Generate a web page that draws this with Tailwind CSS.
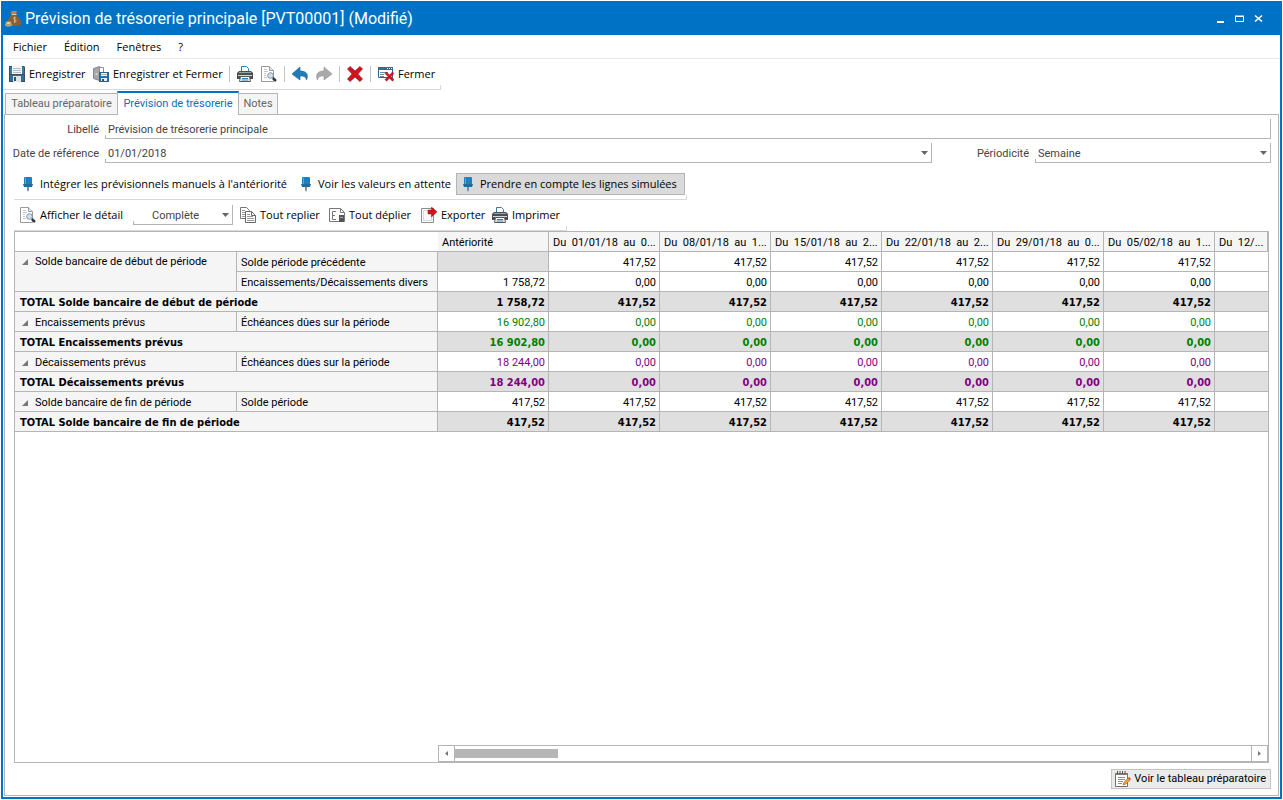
<!DOCTYPE html>
<html lang="fr">
<head>
<meta charset="utf-8">
<meta name="viewport" content="width=device-width, initial-scale=1">
<title>Prévision de trésorerie principale</title>
<script src="https://cdn.jsdelivr.net/npm/@tailwindcss/browser@4"></script>
</head>
<body class="flex min-h-screen bg-white p-px font-['Roboto',sans-serif] text-[11px] leading-4 text-black">
<svg class="hidden" aria-hidden="true">
  <symbol id="save" viewBox="0 0 16 16"><path d="M0 0h15l1 1v15H0z" fill="#3f4f5f"/><path d="M1 1h14v7H1z" fill="#2b7fb8"/><path d="M3 0h10v8H3z" fill="#f4f6f8"/><path d="M4 2.500h8M4 4.500h8M4 6.500h8" stroke="#b4bcc2"/><path d="M1 9h14v6H1z" fill="#1f74b0"/><path d="M4 10h8v6H4z" fill="#dfe4e8"/><path d="M5 11h2v4H5z" fill="#3f4f5f"/></symbol>
  <symbol id="saveclose" viewBox="0 0 16 16"><path d="M.5 2.500 6.500.5v14l-6-2z" fill="#a4a8ac" stroke="#85898d"/><path d="M7 1.500h3.500V6" fill="none" stroke="#8b8f94"/><path d="M2.500 8h2" stroke="#fff"/><path d="M6 6h10v10H6z" fill="#1f74b0"/><path d="M8 6h6v4H8z" fill="#f4f6f8"/><path d="M8 8.500h6" stroke="#a9b3ba"/><path d="M8 12h6v4H8z" fill="#e6ebef"/><path d="M9 13h2v3H9z" fill="#3f4f5f"/><path d="M6.500 6.500h9v9h-9z" fill="none" stroke="#35607f"/></symbol>
  <symbol id="print" viewBox="0 0 16 16"><path d="M4.500 5.500v-5h5l2 2v3" fill="#fff" stroke="#2b7fb8"/><path d="M2 5h12l2 2v6H0V7z" fill="#4a4f54"/><path d="M2 6h12v1H2z" fill="#9da2a6"/><path d="M1 9h14v1H1z" fill="#d5d8da"/><path d="M3.500 10.500h9l1 5h-11z" fill="#fff" stroke="#55585b"/><path d="M5 12.500h6M4.500 14h7" stroke="#2b7fb8"/></symbol>
  <symbol id="preview" viewBox="0 0 16 16"><path d="M.5.500h8l4 4v11H.5z" fill="#fff" stroke="#9a9a9a"/><path d="M8.500.500v4h4" fill="#e6e6e6" stroke="#9a9a9a"/><path d="M3 3.500h3M3 5.500h4M3 7.500h2M3 9.500h2M3 11.500h3" stroke="#c4c4c4"/><circle cx="9.500" cy="9.500" r="2.800" fill="#c9e2f2" stroke="#8b959c"/><path d="m11.800 12 3.200 3" stroke="#333b42" stroke-width="2.400"/></symbol>
  <symbol id="undo" viewBox="0 0 16 16"><path d="M8 1 0 8l8 6v-4c4-.500 6 1 6.500 4C17 8 14 5 8 5z" fill="#1f7cb9" stroke="#19628f" stroke-width=".6"/></symbol>
  <symbol id="redo" viewBox="0 0 16 16"><path d="m8 1 8 7-8 6v-4c-4-.500-6 1-6.500 4C-1 8 2 5 8 5z" fill="#a9a9a9" stroke="#959595" stroke-width=".6"/></symbol>
  <symbol id="cross" viewBox="0 0 16 16"><path d="M3 .5 8 5l5-4.500L15.500 3l-4.700 5 4.700 5-2.500 2.500L8 11l-5 4.500L.5 13l4.700-5L.5 3z" fill="#d3141c" stroke="#8f1016" stroke-width=".7"/></symbol>
  <symbol id="closewin" viewBox="0 0 16 16"><path d="M.5 1.500h14v10H.5z" fill="#fff" stroke="#2f6690"/><path d="M0 1h15v3H0z" fill="#27719f"/><path d="M9 2.500h1M11 2.500h1M13 2.500h1" stroke="#fff"/><path d="M2 6.500h8M2 8.500h4M2 10.500h4" stroke="#7a858d"/><path d="m8.500 6 3 3 3-3L16 7.500l-3 3 3 3-1.500 1.700-3-3-3 3L7 13.500l3-3-3-3z" fill="#d3141c" stroke="#8f1016" stroke-width=".5"/></symbol>
  <symbol id="pin" viewBox="0 0 16 16"><path d="M7 11h2v3l-1 2-1-2z" fill="#8d8d8d"/><path d="M4 1.500 5 1h6l1 .500V8H4z" fill="#1f80bd"/><path d="M5.500 2v6" stroke="#5ba9d8"/><path d="M3 8h10l-1 3H4z" fill="#216c9b"/></symbol>
  <symbol id="copy" viewBox="0 0 16 16"><path d="M.5.500h6l3 3v8h-9z" fill="#fff" stroke="#777"/><path d="M2 3.500h3M2 5.500h3M2 7.500h3M2 9.500h3" stroke="#999"/><path d="M5.500 4.500h6l4 4v7h-10z" fill="#fff" stroke="#666"/><path d="M11.500 4.500v4h4" fill="none" stroke="#666"/><path d="M7 7.500h3M7 9.500h6M7 11.500h7M7 13.500h7" stroke="#999"/></symbol>
  <symbol id="expand" viewBox="0 0 16 16"><path d="M.5 1.500h11l4 4v9H.5z" fill="#fff" stroke="#777"/><path d="M11.500 1.500v4h4" fill="none" stroke="#777"/><path d="M7 4.500H3.500v8H7M3.500 8.500H6" fill="none" stroke="#777"/><path d="M10 8h5v7h-5z" fill="#555"/><path d="M11 10.500h3" stroke="#aaa"/></symbol>
  <symbol id="export" viewBox="0 0 16 16"><path d="M.5 1.500h12v14H.5z" fill="#fff" stroke="#8d8d8d"/><path d="M2.500 3.500h8v10h-8z" fill="#fafafa" stroke="#d8d8d8"/><path d="M7 3h3.500V0L16 4.800 10.500 10V7H7z" fill="#d3141c" stroke="#8f1016" stroke-width=".5"/></symbol>
  <symbol id="notes" viewBox="0 0 16 16"><path d="M.5 2.500h12v13H.5z" fill="#fff" stroke="#77706a"/><path d="M0 2h13v2H0z" fill="#8a7b70"/><path d="M2.500 0v3M5 0v3M7.500 0v3M10 0v3" stroke="#555"/><path d="M3 6.500h7M3 8.500h7M3 10.500h5M3 12.500h4" stroke="#8e8e8e"/><path d="m8 14 1-3 4-4 2 2-4 4z" fill="#e9a13b" stroke="#b36b1d" stroke-width=".6"/><path d="m13 7 1-1 2 2-1 1z" fill="#d9453d"/></symbol>
  <symbol id="bag" viewBox="0 0 16 16"><path d="M7 0h5l-1 3H7L5.500 1z" fill="#b9854a"/><path d="M6.500 3.500h5" stroke="#e7c88f"/><path d="M6.500 4h5c2 2 5 5 4.500 9-.3 1.500-2 2-4 2H5c-3 0-4-4-1.500-7 .8-1.500 2-3 3-4z" fill="#85603a"/><path d="M10.500 6.500c-2-.5-2.500 1.500-.8 2 2 .5 1.800 2.700-.7 2.200M9.700 5.500v6.500" fill="none" stroke="#d9b98a"/><ellipse cx="3.500" cy="13.800" rx="3.500" ry="1.800" fill="#c7a566"/><ellipse cx="3.500" cy="12" rx="3" ry="1.400" fill="#ead59b" stroke="#80602a" stroke-width=".5"/></symbol>
  <symbol id="down" viewBox="0 0 7 4"><path d="M0 0h7L3.500 4z" fill="#666"/></symbol>
  <symbol id="node" viewBox="0 0 6 6"><path d="M6 0v6H0z" fill="#777"/></symbol>
</svg>

<div class="flex min-w-0 flex-1 flex-col border-2 border-[#0072c6]">
  <header class="flex h-8 shrink-0 items-center bg-[#0072c6] pl-0.5 text-white">
    <svg class="size-4 shrink-0"><use href="#bag"/></svg>
    <h1 class="ml-1 flex-1 text-[16px] leading-5">Prévision de trésorerie principale [PVT00001] (Modifié)</h1>
    <div class="flex items-center gap-2.5 pr-4">
      <button aria-label="Réduire" class="h-2.5 w-2"><svg class="h-2.5 w-2" viewBox="0 0 8 10"><path d="M1 7h7v2H1z" fill="#fff"/></svg></button>
      <button aria-label="Agrandir" class="h-2.5 w-2.5"><svg class="size-2.5" viewBox="0 0 10 10"><path d="M1.500 2.500h8v5h-8zM1 2h9" fill="none" stroke="#fff"/></svg></button>
      <button aria-label="Fermer la fenêtre" class="h-2.5 w-2.5"><svg class="size-2.5" viewBox="0 0 10 10"><path d="m1 1.500 7 6M8 1.500l-7 6" fill="none" stroke="#fff" stroke-width="1.600"/></svg></button>
    </div>
  </header>

  <nav class="flex h-6 shrink-0 items-center gap-[17px] border-b border-[#e8e8e8] px-2.5 font-['Open_Sans']" aria-label="Menu">
    <button>Fichier</button><button>Édition</button><button>Fenêtres</button><button>?</button>
  </nav>

  <div class="relative flex h-[31px] w-[438px] shrink-0 items-center border-b border-[#d9d9d9] pl-1.5 font-['Open_Sans'] whitespace-nowrap after:absolute after:right-0 after:bottom-0 after:h-1 after:w-px after:bg-[#d9d9d9] [&_svg]:shrink-0" role="toolbar">
    <button class="flex w-[84px] shrink-0 items-center gap-1"><svg class="size-4"><use href="#save"/></svg>Enregistrer</button>
    <button class="flex w-[129px] shrink-0 items-center gap-1"><svg class="size-4"><use href="#saveclose"/></svg>Enregistrer et Fermer</button>
    <span class="mx-[7px] h-4 w-px shrink-0 bg-[#c4c4c4]"></span>
    <button class="shrink-0" aria-label="Imprimer"><svg class="size-4"><use href="#print"/></svg></button>
    <button class="ml-2 shrink-0" aria-label="Aperçu"><svg class="size-4"><use href="#preview"/></svg></button>
    <span class="mx-[7px] h-4 w-px shrink-0 bg-[#c4c4c4]"></span>
    <button class="shrink-0" aria-label="Annuler"><svg class="size-4"><use href="#undo"/></svg></button>
    <button class="ml-2 shrink-0" aria-label="Rétablir"><svg class="size-4"><use href="#redo"/></svg></button>
    <span class="mx-[7px] h-4 w-px shrink-0 bg-[#c4c4c4]"></span>
    <button class="shrink-0" aria-label="Supprimer"><svg class="size-4"><use href="#cross"/></svg></button>
    <span class="mx-[7px] h-4 w-px shrink-0 bg-[#c4c4c4]"></span>
    <button class="flex shrink-0 items-center gap-1"><svg class="size-4"><use href="#closewin"/></svg>Fermer</button>
  </div>

  <div class="relative z-10 mt-px -mb-0.5 ml-0.5 flex h-6 shrink-0 items-end" role="tablist">
    <button role="tab" class="h-[22px] w-[112px] border border-r-0 border-[#b5b5b5] bg-[#f5f5f5] text-[#666]">Tableau préparatoire</button>
    <button role="tab" aria-selected="true" class="h-6 w-[122px] border-x border-t-2 border-x-[#b5b5b5] border-t-[#0072c6] bg-white text-[#0072c6]">Prévision de trésorerie</button>
    <button role="tab" class="h-[22px] w-[39px] border border-l-0 border-[#b5b5b5] bg-[#f5f5f5] text-[#666]">Notes</button>
  </div>

  <main class="m-px flex min-w-0 flex-1 flex-col border border-[#b5b5b5]">
    <form class="mr-[7px] grid grid-cols-[95px_1fr_98px_241px] gap-y-1 pt-1 text-[#444]">
      <label for="libelle" class="self-center pt-0.5 pr-px text-right">Libellé</label>
      <div class="relative col-span-3 ml-[5px] before:absolute before:bottom-0 before:left-0 before:h-1 before:w-px before:bg-[#b5b5b5]">
        <input id="libelle" class="block h-5 w-full border-r border-b border-[#b5b5b5] pt-0.5 pl-[3px]" value="Prévision de trésorerie principale">
      </div>
      <label for="dateref" class="self-center pt-0.5 pr-px text-right whitespace-nowrap">Date de référence</label>
      <div class="relative ml-[5px] before:absolute before:bottom-0 before:left-0 before:h-1 before:w-px before:bg-[#b5b5b5]">
        <input id="dateref" class="block h-5 w-full border-r border-b border-[#b5b5b5] pt-0.5 pl-[3px]" value="01/01/2018">
        <button type="button" aria-label="Choisir une date" class="absolute top-2 right-1"><svg class="h-1 w-[7px]"><use href="#down"/></svg></button>
      </div>
      <label for="period" class="self-center pt-0.5 pr-px text-right">Périodicité</label>
      <div class="relative ml-[5px] before:absolute before:bottom-0 before:left-0 before:h-1 before:w-px before:bg-[#b5b5b5]">
        <select id="period" class="block h-5 w-full appearance-none border-r border-b border-[#b5b5b5] pt-0.5 pl-[3px]"><option>Semaine</option></select>
        <svg class="pointer-events-none absolute top-2 right-1 h-1 w-[7px]"><use href="#down"/></svg>
      </div>
    </form>

    <div class="relative mt-2.5 ml-[9px] flex h-[27px] w-[673px] shrink-0 items-start border-b border-[#d9d9d9] font-['Open_Sans'] whitespace-nowrap after:absolute after:right-0 after:bottom-0 after:h-1 after:w-px after:bg-[#d9d9d9] [&_svg]:shrink-0" role="toolbar">
      <button class="flex h-[22px] w-[278px] items-center gap-1 pl-1.5"><svg class="size-4"><use href="#pin"/></svg>Intégrer les prévisionnels manuels à l'antériorité</button>
      <button class="flex h-[22px] w-[164px] items-center gap-1 pl-1.5"><svg class="size-4"><use href="#pin"/></svg>Voir les valeurs en attente</button>
      <button aria-pressed="true" class="flex h-[22px] w-[229px] items-center gap-1 border border-[#b5b5b5] bg-[#dadada] pl-[3px]"><svg class="size-4"><use href="#pin"/></svg>Prendre en compte les lignes simulées</button>
    </div>

    <div class="relative ml-[9px] flex h-[31px] w-[553px] shrink-0 items-center border-b border-[#d9d9d9] pl-1.5 font-['Open_Sans'] whitespace-nowrap after:absolute after:right-0 after:bottom-0 after:h-1 after:w-px after:bg-[#d9d9d9] [&_svg]:shrink-0" role="toolbar">
      <button class="flex w-[113px] items-center gap-1"><svg class="size-4"><use href="#preview"/></svg>Afficher le détail</button>
      <div class="relative h-5 w-[100px] before:absolute before:bottom-0 before:left-0 before:h-1 before:w-px before:bg-[#b5b5b5]">
        <select aria-label="Vue" class="block h-5 w-full appearance-none border-r border-b border-[#b5b5b5] pt-0.5 pl-[19px] font-['Roboto'] text-[#444]"><option>Complète</option></select>
        <svg class="pointer-events-none absolute top-2 right-1 h-1 w-[7px]"><use href="#down"/></svg>
      </div>
      <button class="ml-[7px] flex w-[89px] items-center gap-1"><svg class="size-4"><use href="#copy"/></svg>Tout replier</button>
      <button class="flex w-[92px] items-center gap-1"><svg class="size-4"><use href="#expand"/></svg>Tout déplier</button>
      <button class="flex w-[71px] items-center gap-1"><svg class="size-4"><use href="#export"/></svg>Exporter</button>
      <button class="flex items-center gap-1"><svg class="size-4"><use href="#print"/></svg>Imprimer</button>
    </div>

    <section class="mx-[9px] flex min-w-0 flex-1 flex-col overflow-hidden border border-[#b5b5b5]">
      <table class="w-full table-fixed border-separate border-spacing-0 [&_td]:h-5 [&_td]:border-r [&_td]:border-b [&_td]:border-[#b5b5b5] [&_td]:pt-0.5 [&_td]:pr-[3px] [&_td]:text-right [&_td:last-child]:border-r-0 [&_th]:h-5 [&_th]:border-r [&_th]:border-b [&_th]:border-[#b5b5b5] [&_th]:pt-0.5 [&_th]:text-left [&_th]:whitespace-pre [&_thead_th]:pl-1 [&_thead_th]:font-normal [&_tbody_th]:bg-[#f5f5f5]">
        <colgroup><col class="w-[222px]"><col class="w-[201px]"><col class="w-[111px]"><col class="w-[111px]"><col class="w-[111px]"><col class="w-[111px]"><col class="w-[111px]"><col class="w-[111px]"><col class="w-[111px]"><col></colgroup>
        <thead><tr class="[&>th]:bg-[#f5f5f5]"><th colspan="2" class="border-r-0! bg-white!"></th><th>Antériorité</th><th>Du  01/01/18  au  0...</th><th>Du  08/01/18  au  1...</th><th>Du  15/01/18  au  2...</th><th>Du  22/01/18  au  2...</th><th>Du  29/01/18  au  0...</th><th>Du  05/02/18  au  1...</th><th>Du  12/...</th></tr></thead>
        <tbody>
          <tr><th rowspan="2" class="pl-[7px] align-top font-normal"><div class="flex items-center gap-[7px]"><svg class="size-1.5"><use href="#node"/></svg>Solde bancaire de début de période</div></th><th class="pl-1 font-normal">Solde période précédente</th><td class="bg-[#dfdfdf]"></td><td>417,52</td><td>417,52</td><td>417,52</td><td>417,52</td><td>417,52</td><td>417,52</td><td></td></tr>
          <tr><th class="pl-1 font-normal">Encaissements/Décaissements divers</th><td>1 758,72</td><td>0,00</td><td>0,00</td><td>0,00</td><td>0,00</td><td>0,00</td><td>0,00</td><td></td></tr>
          <tr class="font-['DejaVu_Sans_Condensed','DejaVu_Sans'] font-bold [&>td]:bg-[#dfdfdf]"><th colspan="2" class="pl-[5px]">TOTAL Solde bancaire de début de période</th><td>1 758,72</td><td>417,52</td><td>417,52</td><td>417,52</td><td>417,52</td><td>417,52</td><td>417,52</td><td></td></tr>
          <tr class="[&>td]:text-[#008000]"><th class="pl-[7px] font-normal"><div class="flex items-center gap-[7px]"><svg class="size-1.5"><use href="#node"/></svg>Encaissements prévus</div></th><th class="pl-1 font-normal">Échéances dûes sur la période</th><td>16 902,80</td><td>0,00</td><td>0,00</td><td>0,00</td><td>0,00</td><td>0,00</td><td>0,00</td><td></td></tr>
          <tr class="font-['DejaVu_Sans_Condensed','DejaVu_Sans'] font-bold [&>td]:bg-[#dfdfdf] [&>td]:text-[#008000]"><th colspan="2" class="pl-[5px]">TOTAL Encaissements prévus</th><td>16 902,80</td><td>0,00</td><td>0,00</td><td>0,00</td><td>0,00</td><td>0,00</td><td>0,00</td><td></td></tr>
          <tr class="[&>td]:text-[#800080]"><th class="pl-[7px] font-normal"><div class="flex items-center gap-[7px]"><svg class="size-1.5"><use href="#node"/></svg>Décaissements prévus</div></th><th class="pl-1 font-normal">Échéances dûes sur la période</th><td>18 244,00</td><td>0,00</td><td>0,00</td><td>0,00</td><td>0,00</td><td>0,00</td><td>0,00</td><td></td></tr>
          <tr class="font-['DejaVu_Sans_Condensed','DejaVu_Sans'] font-bold [&>td]:bg-[#dfdfdf] [&>td]:text-[#800080]"><th colspan="2" class="pl-[5px]">TOTAL Décaissements prévus</th><td>18 244,00</td><td>0,00</td><td>0,00</td><td>0,00</td><td>0,00</td><td>0,00</td><td>0,00</td><td></td></tr>
          <tr><th class="pl-[7px] font-normal"><div class="flex items-center gap-[7px]"><svg class="size-1.5"><use href="#node"/></svg>Solde bancaire de fin de période</div></th><th class="pl-1 font-normal">Solde période</th><td>417,52</td><td>417,52</td><td>417,52</td><td>417,52</td><td>417,52</td><td>417,52</td><td>417,52</td><td></td></tr>
          <tr class="font-['DejaVu_Sans_Condensed','DejaVu_Sans'] font-bold [&>td]:bg-[#dfdfdf]"><th colspan="2" class="pl-[5px]">TOTAL Solde bancaire de fin de période</th><td>417,52</td><td>417,52</td><td>417,52</td><td>417,52</td><td>417,52</td><td>417,52</td><td>417,52</td><td></td></tr>
        </tbody>
      </table>
      <div class="mt-auto ml-[423px] flex h-[17px] items-stretch border border-[#b5b5b5]">
        <button aria-label="Défiler à gauche" class="flex w-4 items-center justify-center border-r border-[#b5b5b5]"><svg class="h-[5px] w-[3px]" viewBox="0 0 3 5"><path d="M3 0v5L0 2.500z" fill="#777"/></svg></button>
        <div class="flex flex-1 items-center"><div class="h-[9px] w-[103px] bg-[#b5b5b5]"></div></div>
        <button aria-label="Défiler à droite" class="flex w-4 items-center justify-center border-l border-[#b5b5b5]"><svg class="h-[5px] w-[3px]" viewBox="0 0 3 5"><path d="M0 0v5l3-2.500z" fill="#777"/></svg></button>
      </div>
    </section>

    <footer class="mt-1.5 mr-[7px] mb-1.5 flex justify-end">
      <button class="flex h-5 items-center gap-[3px] border border-[#c4c4c4] bg-[#ebebeb] pr-1 pl-[3px]"><svg class="size-4"><use href="#notes"/></svg>Voir le tableau préparatoire</button>
    </footer>
  </main>
</div>
</body>
</html>
